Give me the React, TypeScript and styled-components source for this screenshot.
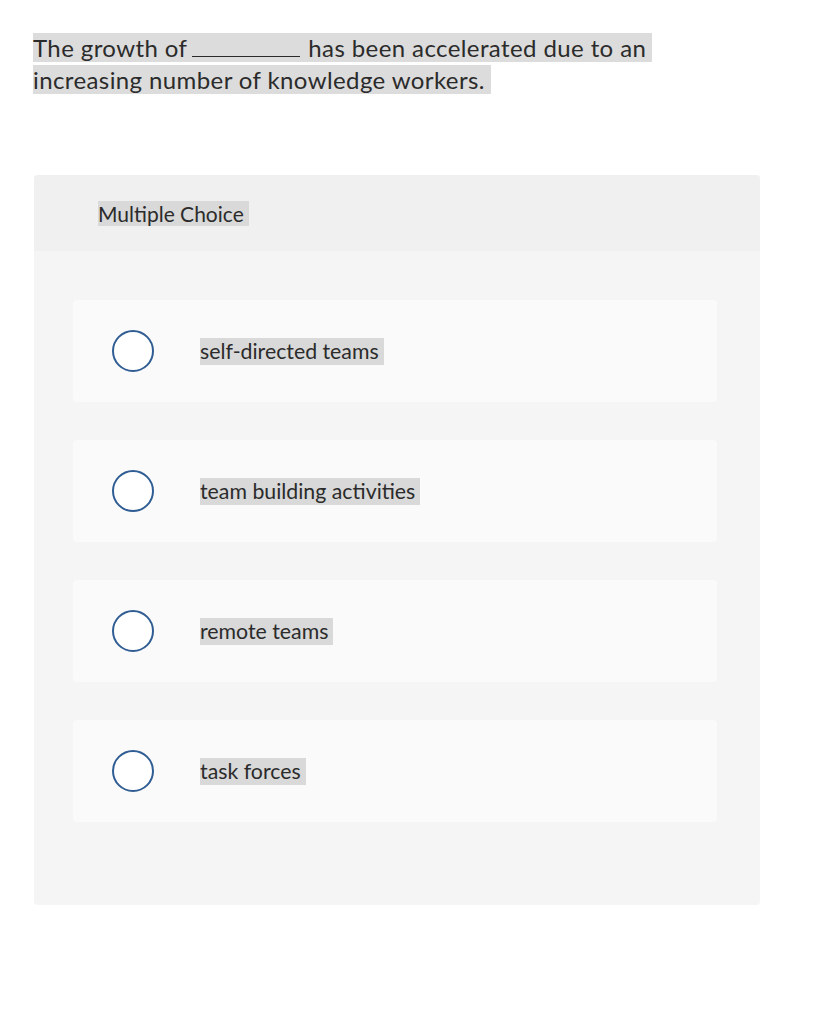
import React from "react";
import styled, { createGlobalStyle } from "styled-components";

const Global = createGlobalStyle`
  html, body { margin: 0; padding: 0; background: #ffffff; }
  body { font-family: "Lato", "Open Sans", "Liberation Sans", sans-serif; color: #2b2b2b; }
`;

const Page = styled.div`
  padding: 32px 0 0 33px;
  width: 728px;
`;

const Question = styled.p`
  margin: 0;
  width: 680px;
  font-size: 24px;
  line-height: 32px;
  letter-spacing: 0.4px;
`;

const Mark = styled.span`
  background: #dcdcdc;
  padding-right: 6px;
  -webkit-box-decoration-break: clone;
  box-decoration-break: clone;
`;

const Blank = styled.span`
  display: inline-block;
  width: 108px;
  height: 1px;
  border-bottom: 1.5px solid #2b2b2b;
  margin: 0 8px 0 5px;
  vertical-align: baseline;
`;

const Card = styled.div`
  margin-top: 79px;
  margin-left: 1px;
  width: 726px;
  background: #f5f5f5;
  border-radius: 4px;
  overflow: hidden;
`;

const CardHeader = styled.div`
  background: #f0f0f0;
  height: 76px;
  padding: 26px 0 0 64px;
  box-sizing: border-box;
`;

const Label = styled.span`
  display: inline-block;
  background: #d9d9d9;
  font-size: 21px;
  line-height: 25px;
  padding-right: 5px;
`;

const Options = styled.div`
  display: flex;
  flex-direction: column;
  gap: 38px;
  padding: 49px 43px 83px 39px;
`;

const Option = styled.div`
  display: flex;
  align-items: center;
  height: 102px;
  background: #fafafa;
  border-radius: 4px;
  padding-left: 39px;
  box-sizing: border-box;
`;

const Radio = styled.span`
  width: 42px;
  height: 42px;
  box-sizing: border-box;
  border: 2px solid #305d93;
  border-radius: 50%;
  background: #ffffff;
  flex: none;
`;

const OptionText = styled.span`
  margin-left: 46px;
  background: #d9d9d9;
  font-size: 21.3px;
  line-height: 27px;
  padding-right: 5px;
`;

const choices = [
  "self-directed teams",
  "team building activities",
  "remote teams",
  "task forces",
];

export default function App() {
  return (
    <>
      <Global />
      <Page>
        <Question>
          <Mark>
            The growth of<Blank />has been accelerated due to an increasing
            number of knowledge workers.
          </Mark>
        </Question>
        <Card>
          <CardHeader>
            <Label>Multiple Choice</Label>
          </CardHeader>
          <Options>
            {choices.map((c) => (
              <Option key={c}>
                <Radio />
                <OptionText>{c}</OptionText>
              </Option>
            ))}
          </Options>
        </Card>
      </Page>
    </>
  );
}
